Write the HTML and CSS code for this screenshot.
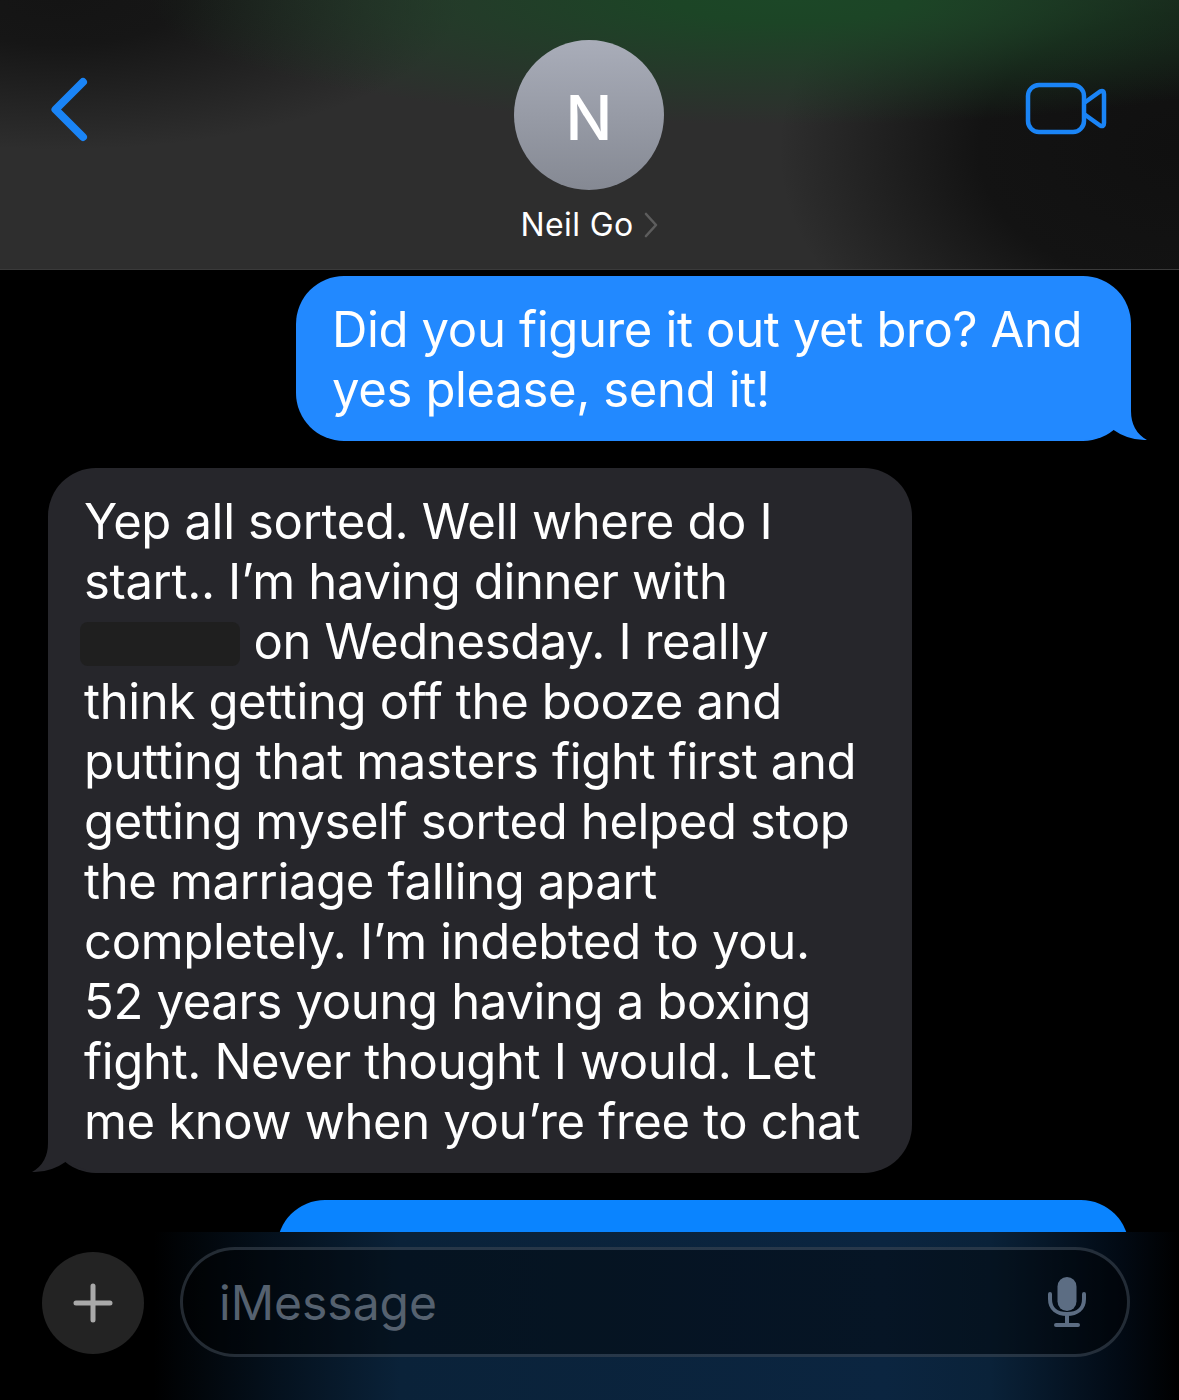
FILE: index.html
```html
<!DOCTYPE html>
<html lang="en">
<head>
  <meta charset="UTF-8">
  <meta name="viewport" content="width=device-width, initial-scale=1.0">
  <title>Neil Go</title>
  <link rel="stylesheet" href="styles.css">
</head>
<body>
  <div class="phone">
    <header class="nav">
      <svg class="back" width="80" height="100" viewBox="0 0 80 100">
        <path d="M53 22 L25.500 49.500 L53 77" fill="none" stroke="#1a84f6" stroke-width="8" stroke-linecap="round" stroke-linejoin="round"/>
      </svg>
      <div class="contact">
        <div class="avatar">N</div>
        <div class="name">Neil Go
          <svg class="name-arrow" width="14" height="26" viewBox="0 0 14 26">
            <path d="M2 2 L12 13 L2 24" fill="none" stroke="#5d5d5d" stroke-width="2.6" stroke-linecap="round" stroke-linejoin="round"/>
          </svg>
        </div>
      </div>
      <svg class="video" width="84" height="54" viewBox="0 0 84 54">
        <rect x="3" y="3" width="56" height="47" rx="11" fill="none" stroke="#1a84f6" stroke-width="4.500"/>
        <path d="M59 21 L75 9.500 Q79 7.500 79 12 L79 41 Q79 45.500 75 43.500 L59 32" fill="none" stroke="#1a84f6" stroke-width="4.500" stroke-linejoin="round"/>
      </svg>
    </header>

    <main class="messages">
      <div class="bubble sent first">
        <svg class="tail tail-right" width="76" height="50" viewBox="0 0 76 50">
          <path d="M0 50 Q24 50 41 38 Q58 50 76 49 Q60 40 60 20 L60 0 L0 0 Z" fill="#2289ff"/>
        </svg>
        <div class="text">
          Did you figure it out yet bro? And<br>
          yes please, send it!
        </div>
      </div>

      <div class="bubble received">
        <svg class="tail tail-left" width="76" height="50" viewBox="0 0 76 50">
          <path d="M76 50 Q52 50 35 38 Q18 50 0 49 Q16 40 16 20 L16 0 L76 0 Z" fill="#26262b"/>
        </svg>
        <div class="text">
          Yep all sorted. Well where do I<br>
          start.. I’m having dinner with<br>
          <span class="redacted"></span> on Wednesday. I really<br>
          think getting off the booze and<br>
          putting that masters fight first and<br>
          getting myself sorted helped stop<br>
          the marriage falling apart<br>
          completely. I’m indebted to you.<br>
          52 years young having a boxing<br>
          fight. Never thought I would. Let<br>
          me know when you’re free to chat
        </div>
      </div>

      <div class="bubble sent last"></div>
    </main>

    <footer class="composer">
      <div class="plus">
        <svg width="44" height="44" viewBox="0 0 44 44">
          <path d="M22 5 V39 M5 22 H39" fill="none" stroke="#a9a9a9" stroke-width="5" stroke-linecap="round"/>
        </svg>
      </div>
      <div class="field">
        <span class="placeholder">iMessage</span>
        <svg class="mic" width="40" height="54" viewBox="0 0 40 54">
          <rect x="10.500" y="2" width="19" height="34" rx="9.500" fill="#5c6d83"/>
          <path d="M3 19 V24 C3 34 10 39 20 39 C30 39 37 34 37 24 V19" fill="none" stroke="#5c6d83" stroke-width="4" stroke-linecap="round"/>
          <path d="M20 39 V49 M9 50 H31" fill="none" stroke="#5c6d83" stroke-width="4" stroke-linecap="round"/>
        </svg>
      </div>
    </footer>
  </div>
</body>
</html>
```

FILE: styles.css
```css
html, body { margin: 0; padding: 0; background: #000; }
.phone { width: 1179px; height: 1400px; display: flex; flex-direction: column; overflow: hidden; font-family: "Inter", "Liberation Sans", sans-serif; color: #fff; }

.nav {
  height: 269px; flex: none; display: flex; justify-content: space-between; align-items: flex-start;
  border-bottom: 1px solid #3a3a3a;
  background:
    radial-gradient(ellipse 640px 125px at 790px 0, #1c4727 0%, #1c4526 18%, rgba(28,70,38,0) 100%),
    radial-gradient(ellipse 400px 270px at 1179px 150px, #101010 0%, #131313 50%, rgba(19,19,19,0) 100%),
    radial-gradient(ellipse 400px 150px at 60px 0, #141414 0%, #161616 30%, rgba(20,20,20,0) 100%),
    #2e2e2e;
}
.back { margin: 60px 0 0 30px; }
.contact { width: 240px; margin: 40px 0 0 43px; display: flex; flex-direction: column; align-items: center; }
.avatar {
  width: 150px; height: 150px; box-sizing: border-box; padding-top: 4px; border-radius: 50%;
  background: linear-gradient(#a9adb9, #858993);
  display: flex; align-items: center; justify-content: center;
  font-size: 62px; font-weight: 500;
}
.name { margin-top: 17px; font-size: 32px; line-height: 36px; letter-spacing: 0.4px; display: flex; align-items: center; gap: 10px; }
.video { margin: 82px 70px 0 0; }

.messages { flex: 1; min-height: 0; overflow: hidden; padding-top: 6px; display: flex; flex-direction: column; gap: 27px; }
.bubble { position: relative; flex: none; box-sizing: border-box; border-radius: 48px; padding: 24px 36px 21px; font-size: 49px; line-height: 60px; letter-spacing: -0.35px; white-space: nowrap; }
.text { position: relative; }
.sent { background: #2289ff; }
.first { width: 835px; margin-left: 296px; }
.last { width: 852px; height: 120px; margin-left: 277px; background: #0a84ff; }
.received { width: 864px; margin-left: 48px; background: #26262b; }
.redacted { display: inline-block; width: 160px; height: 44px; margin-left: -4px; border-radius: 8px; background: #1f1f1f; vertical-align: -7px; }
.tail { position: absolute; bottom: 0; }
.tail-right { right: -16px; }
.tail-left { left: -16px; }

.composer {
  height: 168px; flex: none; box-sizing: border-box; padding: 15px 49px 0 42px;
  display: flex; align-items: flex-start; gap: 36px;
  background: linear-gradient(90deg, #000 0%, #000 13%, #05121f 24%, #0a2239 34%, #0b2540 75%, #0a2239 84%, #020a14 95%, #000 100%);
}
.plus { width: 102px; height: 102px; margin-top: 5px; border-radius: 50%; background: #232323; display: flex; align-items: center; justify-content: center; }
.field {
  flex: 1; height: 110px; box-sizing: border-box; padding: 0 40px 0 36px;
  border: 3px solid rgba(160, 180, 210, 0.22); border-radius: 55px;
  background: rgba(0, 0, 0, 0.42);
  display: flex; align-items: center; justify-content: space-between;
}
.placeholder { font-size: 48px; color: #55616f; }
.mic { flex: none; }
```
